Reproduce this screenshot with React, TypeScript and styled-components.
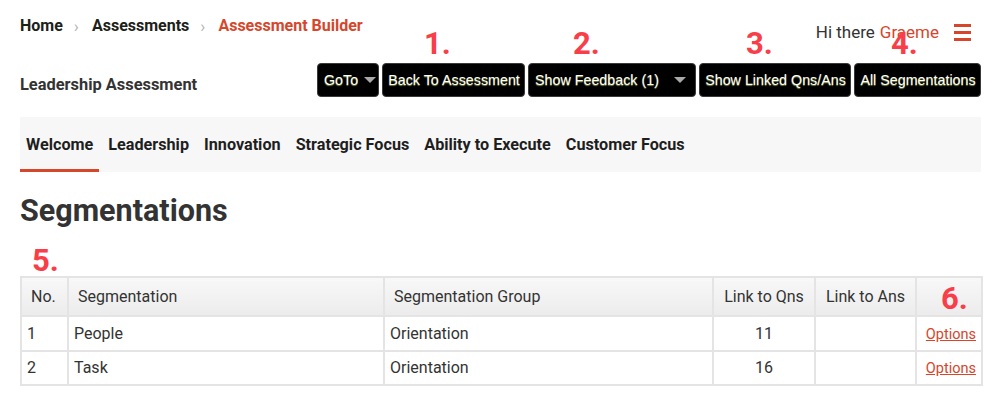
import React from 'react';
import styled, { createGlobalStyle } from 'styled-components';

const GlobalStyle = createGlobalStyle`
  html, body { margin: 0; padding: 0; background: #fff; }
  body { font-family: Roboto, "Liberation Sans", Arial, sans-serif; color: #333; }
`;

const Page = styled.div`
  position: relative;
  width: 961px;
  padding: 0 20px;
`;

const TopBar = styled.div`
  display: flex;
  justify-content: space-between;
  align-items: flex-start;
  height: 50px;
`;

const Crumbs = styled.nav`
  display: flex;
  align-items: center;
  padding-top: 16px;
  font-size: 16px;
  font-weight: 700;
  line-height: 20px;
`;

const Crumb = styled.span<{ $active?: boolean }>`
  color: ${p => (p.$active ? '#d5462b' : '#1c2118')};
`;

const Sep = styled.span`
  color: #b5b5b5;
  font-weight: 400;
  font-size: 17px;
  margin: 0 13px 0 11px;
`;

const Greeting = styled.div`
  display: flex;
  align-items: center;
  padding-top: 22px;
  padding-right: 10px;
  font-size: 17px;
  line-height: 20px;
  color: #333;
`;

const Name = styled.span`
  color: #d5462b;
  margin-left: 5px;
`;

const Burger = styled.span`
  display: inline-flex;
  flex-direction: column;
  gap: 4px;
  margin-left: 15px;
  span {
    display: block;
    width: 17px;
    height: 3px;
    background: #d5462b;
  }
`;

const TitleRow = styled.div`
  display: flex;
  justify-content: space-between;
  align-items: center;
  height: 34px;
  margin-top: 13px;
`;

const Title = styled.h2`
  margin: 8px 0 0;
  font-size: 16.4px;
  font-weight: 700;
  color: #333;
`;

const Buttons = styled.div`
  display: flex;
  gap: 3px;
`;

const Btn = styled.button<{ $w: number; $caret?: boolean }>`
  display: flex;
  align-items: center;
  justify-content: ${p => (p.$caret ? 'space-between' : 'center')};
  width: ${p => p.$w}px;
  height: 34px;
  padding: 0 5px 0 6px;
  background: #000;
  color: #fff;
  border: 1px solid #3a3a3a;
  border-radius: 4px;
  font-family: "Liberation Sans", Arial, sans-serif;
  font-size: 14.3px;
  text-shadow: 0 1px 1px #7d8c3c;
  white-space: nowrap;
`;

const Caret = styled.span<{ $mr?: number }>`
  width: 0;
  height: 0;
  border-left: 6px solid transparent;
  border-right: 6px solid transparent;
  border-top: 6px solid #a9a9a9;
  margin-left: 6px;
  margin-right: ${p => p.$mr || 0}px;
`;

const Tabs = styled.div`
  display: flex;
  gap: 3px;
  height: 55px;
  margin-top: 20px;
  background: #f7f7f7;
`;

const Tab = styled.div<{ $active?: boolean }>`
  display: flex;
  align-items: center;
  padding: 3px 6px 0;
  font-size: 16.2px;
  font-weight: 700;
  color: #1e1e1e;
  border-bottom: 3px solid ${p => (p.$active ? '#d5462b' : 'transparent')};
`;

const Heading = styled.h1`
  margin: 19px 0 0;
  font-size: 30.5px;
  line-height: 40px;
  font-weight: 700;
  color: #333;
`;

const Table = styled.table`
  margin-top: 45px;
  width: 961px;
  border-collapse: collapse;
  table-layout: fixed;
  font-size: 16px;
  color: #333;
`;

const Th = styled.th<{ $align?: string }>`
  height: 37px;
  padding: 0 9px;
  text-align: ${p => p.$align || 'left'};
  font-weight: 400;
  white-space: nowrap;
  border: 2px solid #e4e4e4;
  background: linear-gradient(#f8f8f8, #ececec);
`;

const Td = styled.td<{ $align?: string }>`
  height: 32.5px;
  padding: 0 5px;
  text-align: ${p => p.$align || 'left'};
  border: 2px solid #e4e4e4;
`;

const OptLink = styled.a`
  color: #d5462b;
  text-decoration: underline;
  font-size: 14.5px;
`;

const Mark = styled.span<{ $x: number; $y: number }>`
  position: absolute;
  left: ${p => p.$x}px;
  top: ${p => p.$y}px;
  font-size: 31px;
  line-height: 31px;
  font-weight: 700;
  color: #f83e48;
  pointer-events: none;
`;

const rows = [
  { no: 1, seg: 'People', group: 'Orientation', qns: 11 },
  { no: 2, seg: 'Task', group: 'Orientation', qns: 16 },
];

export default function App() {
  return (
    <Page>
      <GlobalStyle />
      <TopBar>
        <Crumbs>
          <Crumb>Home</Crumb>
          <Sep>›</Sep>
          <Crumb>Assessments</Crumb>
          <Sep>›</Sep>
          <Crumb $active>Assessment Builder</Crumb>
        </Crumbs>
        <Greeting>
          Hi there <Name>Graeme</Name>
          <Burger><span /><span /><span /></Burger>
        </Greeting>
      </TopBar>

      <TitleRow>
        <Title>Leadership Assessment</Title>
        <Buttons>
          <Btn $w={62} $caret>GoTo<Caret /></Btn>
          <Btn $w={143}>Back To Assessment</Btn>
          <Btn $w={168} $caret>Show Feedback (1)<Caret $mr={4} /></Btn>
          <Btn $w={152}>Show Linked Qns/Ans</Btn>
          <Btn $w={127}>All Segmentations</Btn>
        </Buttons>
      </TitleRow>

      <Tabs>
        <Tab $active>Welcome</Tab>
        <Tab>Leadership</Tab>
        <Tab>Innovation</Tab>
        <Tab>Strategic Focus</Tab>
        <Tab>Ability to Execute</Tab>
        <Tab>Customer Focus</Tab>
      </Tabs>

      <Heading>Segmentations</Heading>

      <Table>
        <colgroup>
          <col style={{ width: 47 }} />
          <col style={{ width: 316 }} />
          <col style={{ width: 329 }} />
          <col style={{ width: 102 }} />
          <col style={{ width: 101 }} />
          <col style={{ width: 66 }} />
        </colgroup>
        <thead>
          <tr>
            <Th>No.</Th>
            <Th>Segmentation</Th>
            <Th>Segmentation Group</Th>
            <Th $align="center">Link to Qns</Th>
            <Th $align="center">Link to Ans</Th>
            <Th />
          </tr>
        </thead>
        <tbody>
          {rows.map(r => (
            <tr key={r.no}>
              <Td>{r.no}</Td>
              <Td>{r.seg}</Td>
              <Td>{r.group}</Td>
              <Td $align="center">{r.qns}</Td>
              <Td />
              <Td $align="right"><OptLink href="#">Options</OptLink></Td>
            </tr>
          ))}
        </tbody>
      </Table>

      <Mark $x={424} $y={28}>1.</Mark>
      <Mark $x={573} $y={28}>2.</Mark>
      <Mark $x={746} $y={28}>3.</Mark>
      <Mark $x={891} $y={28}>4.</Mark>
      <Mark $x={32} $y={245}>5.</Mark>
      <Mark $x={941} $y={283}>6.</Mark>
    </Page>
  );
}
